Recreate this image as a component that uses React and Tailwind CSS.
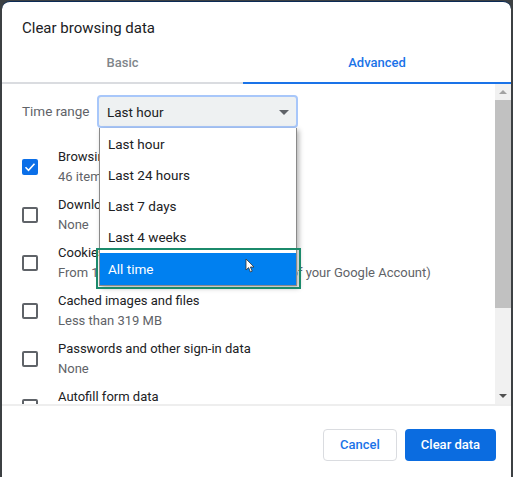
import React from "react";

const rows = [
  { title: "Browsing history", sub: "46 items", checked: true },
  { title: "Download history", sub: "None" },
  { title: "Cookies and other site data", sub: "From 103 sites (you won't be signed out of your Google Account)" },
  { title: "Cached images and files", sub: "Less than 319 MB" },
  { title: "Passwords and other sign-in data", sub: "None" },
  { title: "Autofill form data", sub: "" },
];

const options = ["Last hour", "Last 24 hours", "Last 7 days", "Last 4 weeks", "All time"];

const Checkbox = ({ checked }) =>
  checked ? (
    <div className="w-4 h-4 shrink-0 rounded-[2px] bg-[#0b6fe8] flex items-center justify-center">
      <svg width="12" height="12" viewBox="0 0 12 12" fill="none">
        <path d="M1.5 6.3l3 3 6-6.6" stroke="#fff" strokeWidth="1.6" />
      </svg>
    </div>
  ) : (
    <div className="w-4 h-4 shrink-0 rounded-[2px] border-2 border-[#5f6368] bg-white"></div>
  );

const App = () => {
  return (
    <div className="w-[513px] h-[477px] bg-[#3c4043] overflow-hidden font-['Roboto',sans-serif]">
      <div className="relative w-[509px] h-[476px] ml-[2px] mt-px bg-white rounded-t-lg flex flex-col overflow-hidden border-t border-[#0b2a55]">
        {/* title */}
        <div className="h-[48px] pl-5 pt-[15px] text-[15px] leading-[22px] text-[#202124]">
          Clear browsing data
        </div>

        {/* tabs */}
        <div className="flex h-[34px] text-[13px] font-medium">
          <div className="w-[241px] h-full border-b-2 border-[#dadce0] flex items-center justify-center text-[#80868b] pb-[7px]">
            Basic
          </div>
          <div className="flex-1 h-full border-b-2 border-[#1a73e8] flex items-center justify-center text-[#1a73e8] pb-[7px]">
            Advanced
          </div>
        </div>

        {/* scroll area */}
        <div className="flex h-[320px] overflow-hidden">
          <div className="flex-1 pl-5 overflow-hidden">
            <div className="flex items-center h-[33px] mt-[11px] mb-[15px]">
              <span className="w-[75px] text-[13.5px] text-[#5f6368]">Time range</span>
              <div className="w-[201px] h-[33px] rounded-[4px] border-2 border-[#a8c7fa] bg-[#eef1f2] flex items-center justify-between pl-2 pr-[7px] pt-[2px] text-[13.5px] text-[#202124]">
                Last hour
                <svg width="10" height="5" viewBox="0 0 10 5">
                  <path d="M0 0h10L5 5z" fill="#5f6368" />
                </svg>
              </div>
            </div>
            <div className="flex flex-col">
              {rows.map((row) => (
                <div key={row.title} className="flex items-center h-[48px] gap-5">
                  <Checkbox checked={row.checked} />
                  <div className="text-[13px] leading-5 whitespace-nowrap">
                    <div className="text-[#202124]">{row.title}</div>
                    <div className="text-[#5f6368] min-h-5">{row.sub}</div>
                  </div>
                </div>
              ))}
            </div>
          </div>

          {/* scrollbar */}
          <div className="w-4 h-full bg-[#f1f1f1] flex flex-col items-center">
            <div className="h-4 shrink-0 flex items-center justify-center">
              <svg width="8" height="4" viewBox="0 0 8 4">
                <path d="M0 4h8L4 0z" fill="#a3a3a3" />
              </svg>
            </div>
            <div className="w-full h-[208px] shrink-0 bg-[#c1c1c1]"></div>
            <div className="flex-1"></div>
            <div className="h-4 shrink-0 flex items-center justify-center">
              <svg width="8" height="4" viewBox="0 0 8 4">
                <path d="M0 0h8L4 4z" fill="#505050" />
              </svg>
            </div>
          </div>
        </div>

        {/* footer */}
        <div className="flex-1 border-t-2 border-[#eeeeee] flex justify-end gap-2 pr-[15px] pt-[23px] text-[13px] font-medium">
          <button className="w-[74px] h-8 rounded-[4px] border border-[#dadce0] bg-white text-[#1a73e8]">
            Cancel
          </button>
          <button className="w-[91px] h-8 rounded-[4px] bg-[#0b6ce0] text-white">
            Clear data
          </button>
        </div>

        {/* open dropdown */}
        <div className="absolute left-[97px] top-[126px] w-[198px] h-[158px] bg-white border-x border-b border-[#8a8a8a] shadow-[2px_2px_5px_rgba(0,0,0,0.3)] text-[13.5px] text-[#202124]">
          {options.map((option) => (
            <div
              key={option}
              className={
                option === "All time"
                  ? "h-[32px] flex items-center pl-2 bg-[#0080f0] text-white"
                  : "h-[31.25px] flex items-center pl-2"
              }
            >
              {option}
            </div>
          ))}
        </div>

        {/* green highlight */}
        <div className="absolute left-[94px] top-[246px] w-[205px] h-[41px] border-2 border-[#1b8a6b]"></div>

        {/* pointer */}
        <svg className="absolute left-[243px] top-[256px]" width="10" height="15" viewBox="0 0 10 15">
          <path d="M1 1v11l2.6-2.4L5.4 14l1.8-.8-1.8-4.2H9z" fill="#fff" stroke="#333" strokeWidth="0.8" />
        </svg>
      </div>
    </div>
  );
};

export default App;
